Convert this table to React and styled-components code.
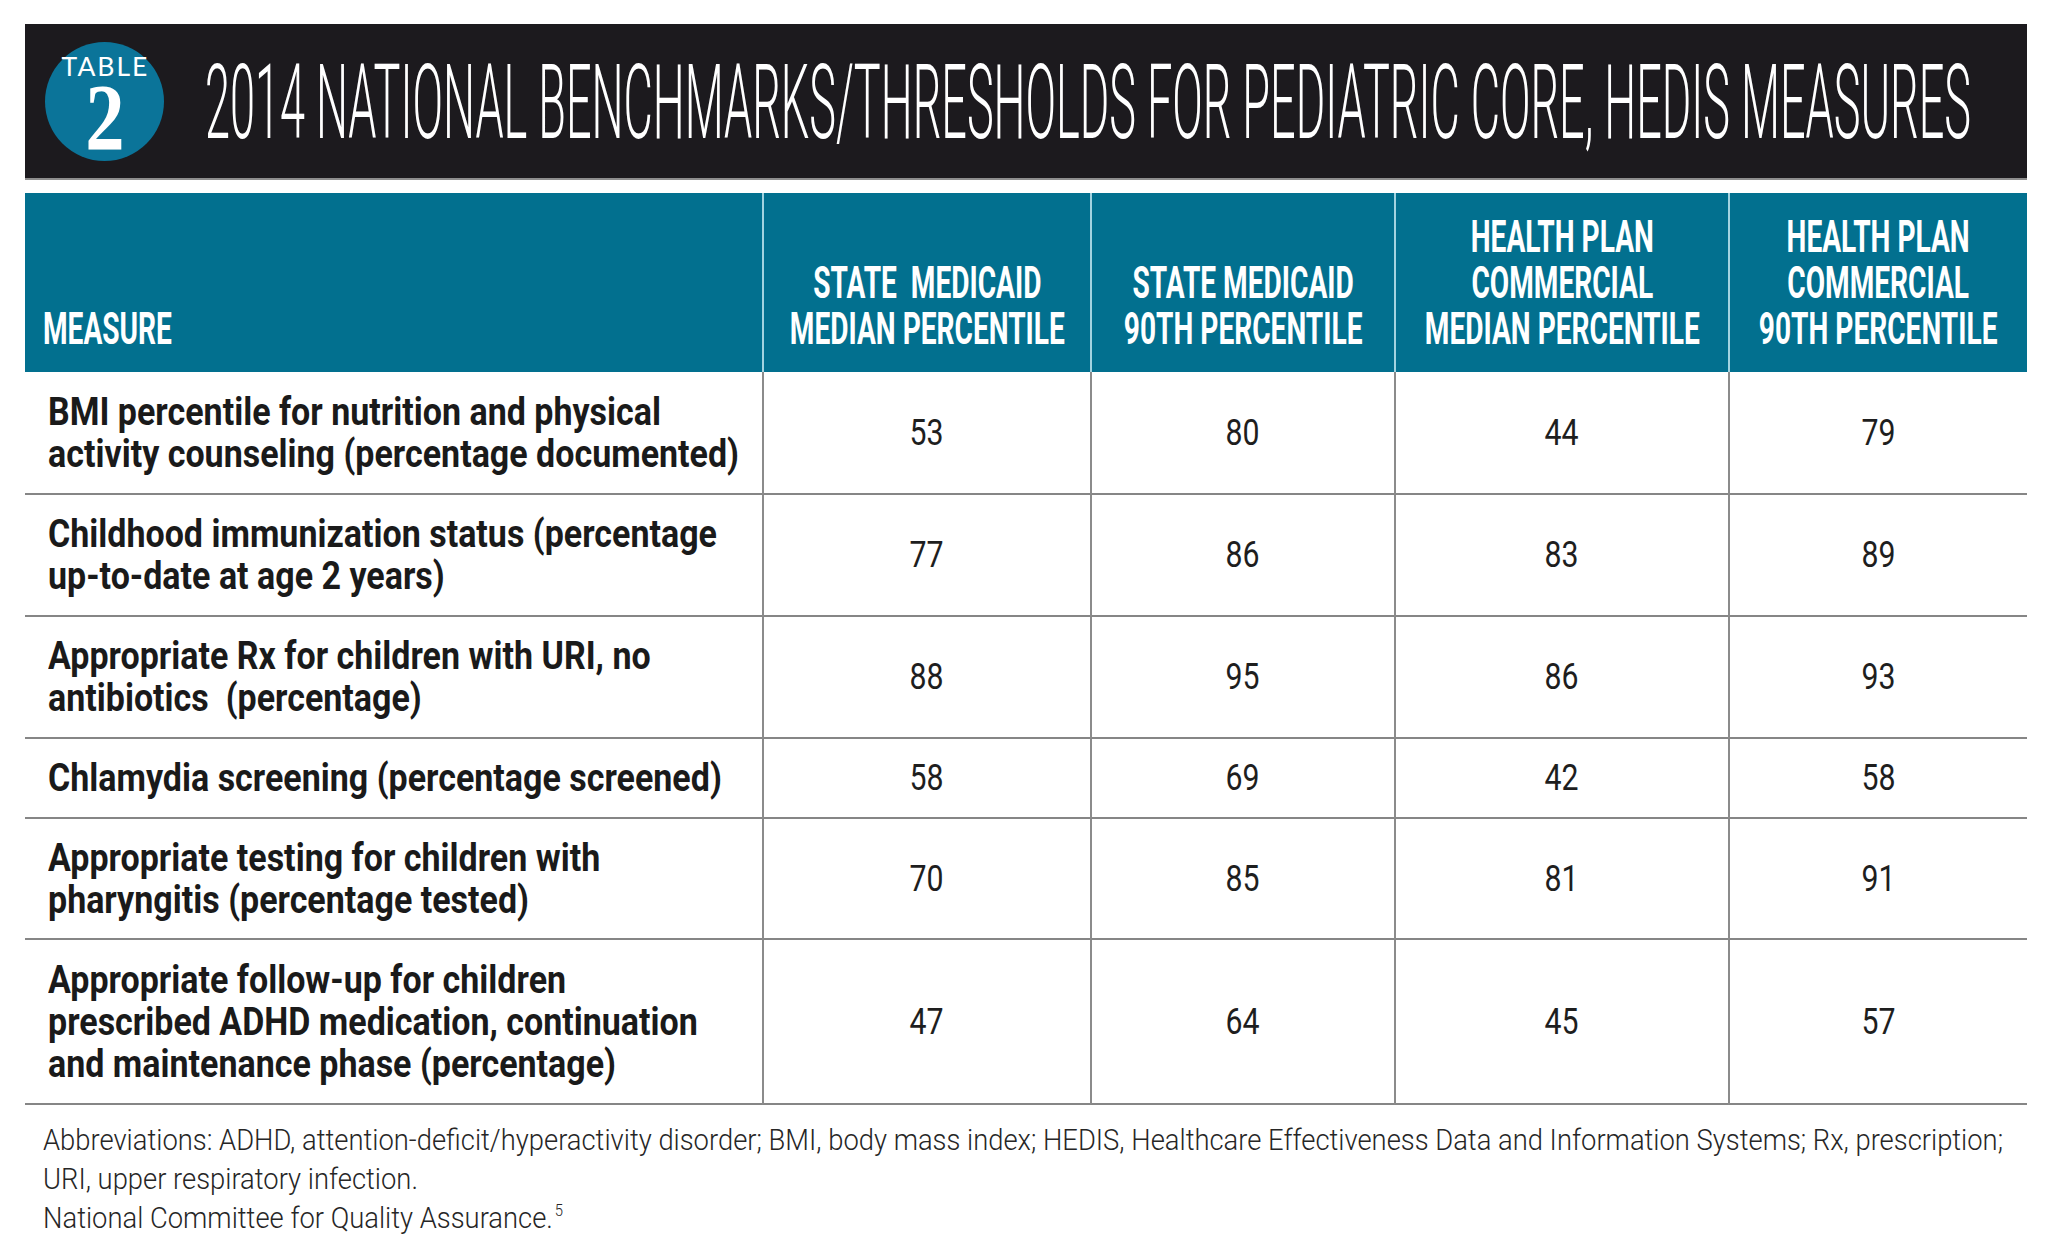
import React from 'react';
import styled, { createGlobalStyle } from 'styled-components';

const FONT = 'Roboto, "Liberation Sans", Arial, sans-serif';

const GlobalStyle = createGlobalStyle`
  html, body {
    margin: 0;
    padding: 0;
    background: #ffffff;
    overflow: hidden;
  }
  body {
    font-family: ${FONT};
    color: #1b1b1b;
  }
`;

const ctx =
  typeof document !== 'undefined'
    ? document.createElement('canvas').getContext('2d')
    : null;

const fitScale = (font, text, target) => {
  if (!ctx) return 1;
  ctx.font = font;
  const w = ctx.measureText(text).width;
  return w > 0 ? target / w : 1;
};

const TITLE =
  '2014 NATIONAL BENCHMARKS/THRESHOLDS FOR PEDIATRIC CORE, HEDIS MEASURES';
const NOTE1 =
  'Abbreviations: ADHD, attention-deficit/hyperactivity disorder; BMI, body mass index; HEDIS, Healthcare Effectiveness Data and Information Systems; Rx, prescription;';
const NOTE2 = 'URI, upper respiratory infection.';
const NOTE3 = 'National Committee for Quality Assurance.';

const kTitle = fitScale(`300 103px ${FONT}`, TITLE, 1766);
const kHead = fitScale(`700 43.6px ${FONT}`, 'MEDIAN PERCENTILE', 275);
const kBody = fitScale(
  `700 38px ${FONT}`,
  'activity counseling (percentage documented)',
  691
);
const kNum = fitScale(`400 36.6px ${FONT}`, '53', 34);
const kNote = fitScale(`300 29.5px ${FONT}`, NOTE1, 1960);

const HEADERS = [
  ['MEASURE'],
  ['STATE  MEDICAID', 'MEDIAN PERCENTILE'],
  ['STATE MEDICAID', '90TH PERCENTILE'],
  ['HEALTH PLAN', 'COMMERCIAL', 'MEDIAN PERCENTILE'],
  ['HEALTH PLAN', 'COMMERCIAL', '90TH PERCENTILE'],
];

const ROWS = [
  {
    measure: [
      'BMI percentile for nutrition and physical',
      'activity counseling (percentage documented)',
    ],
    values: [53, 80, 44, 79],
  },
  {
    measure: [
      'Childhood immunization status (percentage',
      'up-to-date at age 2 years)',
    ],
    values: [77, 86, 83, 89],
  },
  {
    measure: [
      'Appropriate Rx for children with URI, no',
      'antibiotics  (percentage)',
    ],
    values: [88, 95, 86, 93],
  },
  {
    measure: ['Chlamydia screening (percentage screened)'],
    values: [58, 69, 42, 58],
  },
  {
    measure: [
      'Appropriate testing for children with',
      'pharyngitis (percentage tested)',
    ],
    values: [70, 85, 81, 91],
  },
  {
    measure: [
      'Appropriate follow-up for children',
      'prescribed ADHD medication, continuation',
      'and maintenance phase (percentage)',
    ],
    values: [47, 64, 45, 57],
  },
];

const Page = styled.div`
  width: 2002px;
  padding: 24px 25px 0;
  overflow: hidden;
`;

const Banner = styled.header`
  display: flex;
  align-items: center;
  height: 156px;
  box-sizing: border-box;
  padding-left: 20px;
  background: #1c1a1e;
  border-bottom: 2px solid #8e8e8e;
  overflow: hidden;
`;

const Badge = styled.div`
  flex: none;
  width: 119px;
  height: 119px;
  box-sizing: border-box;
  padding-top: 11px;
  border-radius: 50%;
  background: #0b7499;
  color: #ffffff;
  display: flex;
  flex-direction: column;
  align-items: center;
`;

const BadgeLabel = styled.span`
  display: block;
  font-family: Lato, "Open Sans", sans-serif;
  font-weight: 400;
  font-size: 26.5px;
  line-height: 26.5px;
  letter-spacing: 2px;
  padding-left: 2px;
`;

const BadgeNum = styled.span`
  display: block;
  margin-top: 4px;
  font-family: "Liberation Serif", "Times New Roman", serif;
  font-weight: 700;
  font-size: 96px;
  line-height: 70px;
  transform: scaleX(0.82);
`;

const Title = styled.h1`
  flex: 1;
  min-width: 0;
  margin: 0 0 0 41px;
  padding-top: 3px;
  font-family: ${FONT};
  font-weight: 300;
  font-size: 103px;
  line-height: 103px;
  color: #ffffff;
  white-space: nowrap;
`;

const Squeeze = styled.span`
  display: inline-block;
  white-space: pre;
  text-align: ${(p) => (p.$center ? 'center' : 'left')};
  transform: scaleX(${(p) => p.$k});
  transform-origin: ${(p) => (p.$center ? 'center' : 'left')} center;
`;

const Table = styled.div`
  display: grid;
  grid-template-columns: 737px 328px 304px 334px 299px;
  grid-template-rows: 179px 123px 122px 122px 80px 121px 165px;
  margin-top: 13px;
`;

const HeadCell = styled.div`
  min-width: 0;
  box-sizing: border-box;
  display: flex;
  flex-direction: column;
  justify-content: flex-end;
  align-items: ${(p) => (p.$left ? 'flex-start' : 'center')};
  padding: 0 0 19px ${(p) => (p.$left ? '18px' : '0')};
  background: #02708f;
  border-left: ${(p) => (p.$left ? 'none' : '2px solid #a3d3e0')};
  color: #ffffff;
  font-family: ${FONT};
  font-weight: 700;
  font-size: 43.6px;
  line-height: 46px;
`;

const BodyCell = styled.div`
  min-width: 0;
  box-sizing: border-box;
  display: flex;
  align-items: center;
  justify-content: ${(p) => (p.$left ? 'flex-start' : 'center')};
  padding-left: ${(p) => (p.$left ? '23px' : '0')};
  border-bottom: 2px solid #868686;
  border-left: ${(p) => (p.$left ? 'none' : '2px solid #8b8b8b')};
`;

const MeasureText = styled.div`
  font-family: ${FONT};
  font-weight: 700;
  font-size: 38px;
  line-height: 42px;
  color: #1a1a1a;
`;

const NumText = styled.div`
  font-family: ${FONT};
  font-weight: 400;
  font-size: 36.6px;
  line-height: 40px;
  color: #1e1e1e;
`;

const Notes = styled.div`
  margin-top: 16px;
  padding-left: 18px;
  font-family: ${FONT};
  font-weight: 300;
  font-size: 29.5px;
  line-height: 39px;
  color: #262626;
`;

const Sup = styled.sup`
  font-size: 16px;
  line-height: 0;
  vertical-align: 12px;
  margin-left: 2px;
`;

const joinLines = (lines) =>
  lines.map((l, i) => (
    <React.Fragment key={i}>
      {i > 0 && <br />}
      {l}
    </React.Fragment>
  ));

export default function App() {
  return (
    <>
      <GlobalStyle />
      <Page>
        <Banner>
          <Badge>
            <BadgeLabel>TABLE</BadgeLabel>
            <BadgeNum>2</BadgeNum>
          </Badge>
          <Title>
            <Squeeze $k={kTitle}>{TITLE}</Squeeze>
          </Title>
        </Banner>

        <Table>
          {HEADERS.map((lines, i) => (
            <HeadCell key={`h${i}`} $left={i === 0}>
              <Squeeze $k={kHead} $center={i !== 0}>
                {joinLines(lines)}
              </Squeeze>
            </HeadCell>
          ))}
          {ROWS.map((row, r) => (
            <React.Fragment key={`r${r}`}>
              <BodyCell $left>
                <MeasureText>
                  <Squeeze $k={kBody}>{joinLines(row.measure)}</Squeeze>
                </MeasureText>
              </BodyCell>
              {row.values.map((v, c) => (
                <BodyCell key={c}>
                  <NumText>
                    <Squeeze $k={kNum} $center>
                      {v}
                    </Squeeze>
                  </NumText>
                </BodyCell>
              ))}
            </React.Fragment>
          ))}
        </Table>

        <Notes>
          <Squeeze $k={kNote}>
            {NOTE1}
            <br />
            {NOTE2}
            <br />
            {NOTE3}
            <Sup>5</Sup>
          </Squeeze>
        </Notes>
      </Page>
    </>
  );
}
